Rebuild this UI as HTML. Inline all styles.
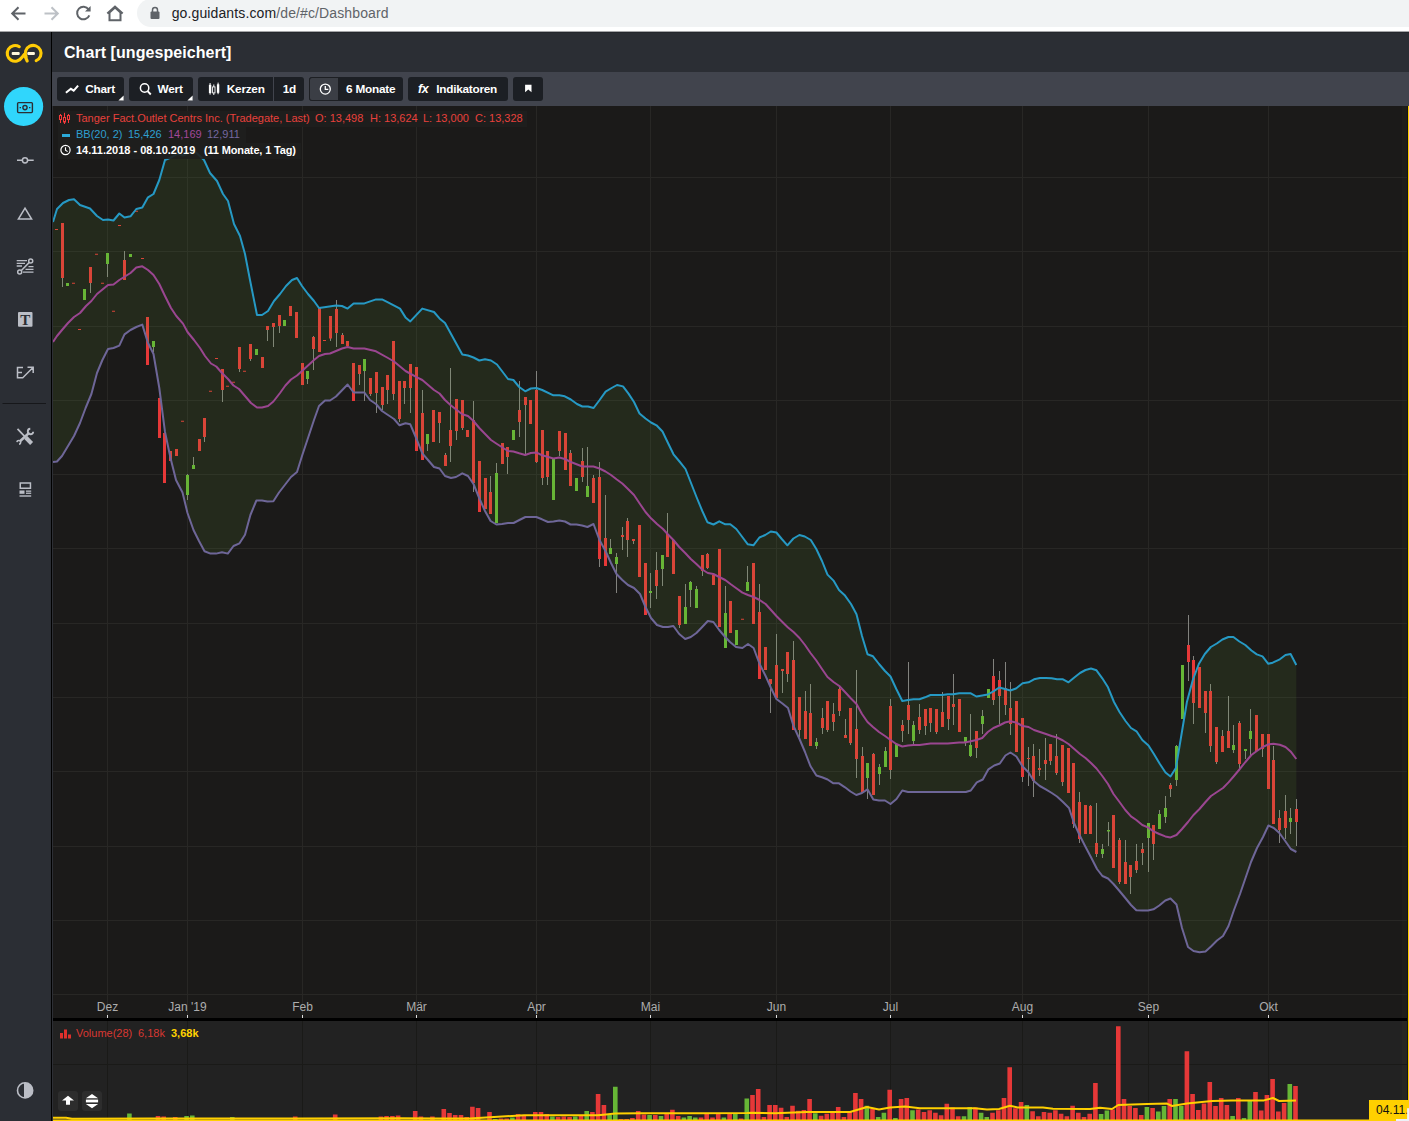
<!DOCTYPE html>
<html lang="de"><head><meta charset="utf-8"><title>Chart [ungespeichert]</title>
<style>
html,body{margin:0;padding:0;background:#1b1a19;}
body{width:1409px;height:1121px;position:relative;overflow:hidden;font-family:"Liberation Sans",sans-serif;}
svg text{font-family:"Liberation Sans",sans-serif;}
#browser{position:absolute;left:0;top:0;width:1409px;height:31px;background:#fff;}
#pill{position:absolute;left:137px;top:-1px;width:1400px;height:28px;border-radius:14px;background:#f1f3f4;}
#url{position:absolute;left:171.7px;top:4px;font-size:14px;line-height:18px;color:#5f6368;white-space:nowrap;letter-spacing:0.12px;}
#url b{font-weight:normal;color:#202124;}
#bline{position:absolute;left:0;top:31px;width:1409px;height:1px;background:#a5a6a8;}#bline2{position:absolute;left:0;top:32px;width:1409px;height:1px;background:#24272c;}
#titlebar{position:absolute;left:0;top:32px;width:1409px;height:40px;background:#2b2e34;}
#title{position:absolute;left:64px;top:43px;font-size:16px;line-height:20px;font-weight:bold;color:#fff;white-space:nowrap;letter-spacing:0.06px;}
#toolbar{position:absolute;left:52px;top:72px;width:1357px;height:34px;background:#41444d;}
#sidebar{position:absolute;left:0;top:32px;width:51px;height:1089px;background:#2b2e34;}
#sideline{position:absolute;left:51px;top:32px;width:1px;height:1089px;background:#000;}#sideline2{position:absolute;left:52px;top:106px;width:1px;height:1015px;background:#2d2f35;}
.btn{position:absolute;top:77px;height:24px;background:#1c1f24;border-radius:3px;color:#fff;font-weight:bold;font-size:11.8px;letter-spacing:-0.25px;line-height:24px;white-space:nowrap;}
.btn span{position:absolute;top:0;}
.leg{position:absolute;left:58px;height:16px;background:rgba(31,31,30,0.9);font-size:11px;line-height:16px;white-space:nowrap;}
.leg span{position:absolute;top:-1px;margin-left:-2px;}
.sbtn{position:absolute;top:1091px;width:20px;height:20px;border-radius:3px;background:#2d2d2d;}
</style></head><body>
<svg id="chart" width="1409" height="1121" viewBox="0 0 1409 1121" style="position:absolute;left:0;top:0">
<rect x="53" y="106" width="1356" height="912" fill="#1b1a19"/>
<rect x="53" y="1021" width="1356" height="100" fill="#222222"/>
<rect x="1402" y="106" width="6" height="912" fill="#1f1e19"/>
<rect x="1402" y="1021" width="6" height="79" fill="#272621"/>
<path d="M107.5 106 V1018 M187.5 106 V1018 M302.5 106 V1018 M416.5 106 V1018 M536.5 106 V1018 M650.5 106 V1018 M776.5 106 V1018 M890.5 106 V1018 M1022.5 106 V1018 M1148.5 106 V1018 M1268.5 106 V1018 M53 177.5 H1409 M53 251.5 H1409 M53 326.5 H1409 M53 400.5 H1409 M53 474.5 H1409 M53 548.5 H1409 M53 623.5 H1409 M53 697.5 H1409 M53 771.5 H1409 M53 846.5 H1409 M53 920.5 H1409 M53 994.5 H1409" stroke="#282725" stroke-width="1" fill="none" shape-rendering="crispEdges"/>
<path d="M107.5 1021 V1121 M187.5 1021 V1121 M302.5 1021 V1121 M416.5 1021 V1121 M536.5 1021 V1121 M650.5 1021 V1121 M776.5 1021 V1121 M890.5 1021 V1121 M1022.5 1021 V1121 M1148.5 1021 V1121 M1268.5 1021 V1121 M53 1064.5 H1409" stroke="#1a1a18" stroke-width="1" fill="none" shape-rendering="crispEdges"/>
<path d="M62.5 223.0 V287.0 M90.5 267.0 V293.0 M107.5 253.0 V277.0 M124.5 251.0 V280.0 M153.5 341.0 V352.0 M187.5 474.0 V500.0 M193.5 457.0 V469.0 M204.5 418.0 V442.0 M222.5 369.0 V402.0 M239.5 347.0 V372.0 M250.5 344.0 V361.0 M267.5 326.0 V341.0 M273.5 323.0 V347.0 M279.5 315.0 V333.0 M307.5 371.0 V384.0 M313.5 336.0 V370.0 M330.5 316.0 V341.0 M336.5 300.0 V347.0 M342.5 333.0 V344.0 M359.5 365.0 V385.0 M364.5 359.0 V401.0 M370.5 378.0 V396.0 M376.5 372.0 V413.0 M382.5 387.0 V410.0 M387.5 375.0 V404.0 M393.5 341.0 V400.0 M399.5 381.0 V422.0 M404.5 381.0 V404.0 M410.5 364.0 V413.0 M422.5 390.0 V460.0 M427.5 434.0 V451.0 M439.5 412.0 V443.0 M445.5 453.0 V466.0 M450.5 368.0 V462.0 M456.5 399.0 V440.0 M462.5 400.0 V430.0 M473.5 401.0 V492.0 M490.5 476.0 V514.0 M496.5 463.0 V523.0 M507.5 447.0 V474.0 M519.5 381.0 V437.0 M525.5 397.0 V454.0 M536.5 371.0 V463.0 M542.5 430.0 V485.0 M547.5 451.0 V485.0 M559.5 431.0 V456.0 M570.5 450.0 V486.0 M582.5 448.0 V482.0 M587.5 447.0 V497.0 M593.5 475.0 V503.0 M599.5 462.0 V567.0 M605.5 495.0 V566.0 M610.5 539.0 V554.0 M616.5 553.0 V593.0 M622.5 527.0 V550.0 M627.5 518.0 V557.0 M633.5 539.0 V544.0 M650.5 573.0 V608.0 M656.5 552.0 V599.0 M662.5 555.0 V586.0 M667.5 513.0 V557.0 M679.5 596.0 V628.0 M685.5 584.0 V624.0 M690.5 581.0 V607.0 M696.5 586.0 V608.0 M702.5 555.0 V576.0 M707.5 553.0 V569.0 M725.5 586.0 V648.0 M747.5 566.0 V591.0 M759.5 584.0 V679.0 M770.5 679.0 V713.0 M776.5 634.0 V698.0 M782.5 669.0 V693.0 M787.5 652.0 V682.0 M793.5 641.0 V730.0 M799.5 697.0 V737.0 M805.5 691.0 V739.0 M810.5 684.0 V746.0 M816.5 738.0 V749.0 M822.5 708.0 V734.0 M827.5 701.0 V732.0 M833.5 703.0 V731.0 M839.5 687.0 V716.0 M845.5 719.0 V738.0 M850.5 708.0 V745.0 M856.5 670.0 V778.0 M862.5 747.0 V792.0 M867.5 763.0 V799.0 M873.5 753.0 V795.0 M879.5 764.0 V785.0 M885.5 747.0 V767.0 M890.5 699.0 V779.0 M902.5 720.0 V742.0 M908.5 662.0 V734.0 M913.5 721.0 V745.0 M919.5 704.0 V734.0 M925.5 709.0 V735.0 M930.5 708.0 V732.0 M936.5 709.0 V734.0 M942.5 692.0 V727.0 M948.5 696.0 V730.0 M953.5 674.0 V725.0 M965.5 737.0 V746.0 M970.5 714.0 V757.0 M976.5 731.0 V758.0 M982.5 710.0 V734.0 M993.5 659.0 V705.0 M999.5 671.0 V724.0 M1005.5 662.0 V715.0 M1010.5 682.0 V735.0 M1022.5 718.0 V782.0 M1028.5 747.0 V786.0 M1033.5 744.0 V797.0 M1039.5 749.0 V776.0 M1045.5 738.0 V780.0 M1050.5 744.0 V765.0 M1056.5 734.0 V775.0 M1062.5 745.0 V786.0 M1073.5 763.0 V828.0 M1079.5 792.0 V843.0 M1090.5 805.0 V834.0 M1096.5 803.0 V857.0 M1102.5 844.0 V858.0 M1108.5 822.0 V846.0 M1119.5 838.0 V884.0 M1125.5 840.0 V884.0 M1130.5 865.0 V894.0 M1136.5 844.0 V873.0 M1142.5 843.0 V865.0 M1148.5 823.0 V872.0 M1153.5 825.0 V860.0 M1159.5 810.0 V829.0 M1165.5 796.0 V823.0 M1170.5 783.0 V797.0 M1176.5 745.0 V786.0 M1188.5 615.0 V681.0 M1193.5 656.0 V724.0 M1205.5 691.0 V733.0 M1210.5 684.0 V752.0 M1216.5 727.0 V764.0 M1222.5 730.0 V752.0 M1228.5 696.0 V748.0 M1233.5 725.0 V753.0 M1239.5 721.0 V768.0 M1245.5 749.0 V759.0 M1250.5 709.0 V755.0 M1262.5 734.0 V757.0 M1273.5 746.0 V824.0 M1279.5 810.0 V843.0 M1285.5 795.0 V839.0 M1290.5 808.0 V834.0 M1296.5 799.0 V846.0" stroke="#82827e" stroke-width="1" fill="none"/>
<path d="M55 229.0 h3 V230.0 h-3z M61 223.0 h3 V278.0 h-3z M72 282.8 h3 V283.8 h-3z M78 328.9 h3 V329.9 h-3z M89 267.0 h3 V283.0 h-3z M95 253.8 h3 V254.8 h-3z M101 282.8 h3 V283.8 h-3z M112 310.8 h3 V311.8 h-3z M118 225.0 h3 V226.0 h-3z M123 260.0 h3 V280.0 h-3z M135 210.8 h3 V211.8 h-3z M141 258.0 h3 V259.0 h-3z M146 317.0 h3 V365.0 h-3z M158 398.0 h3 V438.0 h-3z M163 433.0 h3 V483.0 h-3z M169 451.0 h3 V461.0 h-3z M175 449.0 h3 V456.0 h-3z M181 420.8 h3 V421.8 h-3z M198 439.0 h3 V451.0 h-3z M203 418.0 h3 V437.0 h-3z M209 390.8 h3 V391.8 h-3z M215 357.9 h3 V358.9 h-3z M221 369.0 h3 V390.0 h-3z M226 385.8 h3 V386.8 h-3z M232 381.8 h3 V382.8 h-3z M238 347.0 h3 V369.0 h-3z M243 370.8 h3 V371.8 h-3z M249 344.0 h3 V359.0 h-3z M261 357.0 h3 V368.0 h-3z M266 326.0 h3 V330.0 h-3z M272 323.0 h3 V327.0 h-3z M278 315.0 h3 V326.0 h-3z M289 306.0 h3 V316.0 h-3z M295 312.0 h3 V338.0 h-3z M301 363.0 h3 V385.0 h-3z M312 337.0 h3 V349.0 h-3z M318 308.0 h3 V352.0 h-3z M323 339.9 h3 V340.9 h-3z M329 316.0 h3 V338.6 h-3z M335 309.0 h3 V333.0 h-3z M341 335.0 h3 V344.0 h-3z M346 341.0 h3 V346.0 h-3z M352 363.0 h3 V401.0 h-3z M358 365.0 h3 V374.0 h-3z M369 378.0 h3 V394.0 h-3z M375 372.0 h3 V393.0 h-3z M381 387.0 h3 V405.0 h-3z M386 375.0 h3 V390.0 h-3z M392 341.0 h3 V394.0 h-3z M398 381.0 h3 V419.0 h-3z M403 381.0 h3 V388.0 h-3z M409 364.0 h3 V388.0 h-3z M415 367.0 h3 V451.0 h-3z M421 413.0 h3 V460.0 h-3z M432 410.0 h3 V442.0 h-3z M438 412.0 h3 V423.0 h-3z M444 455.0 h3 V466.0 h-3z M449 430.0 h3 V446.0 h-3z M455 399.0 h3 V431.0 h-3z M461 400.0 h3 V428.0 h-3z M466 430.0 h3 V437.0 h-3z M472 420.0 h3 V483.0 h-3z M478 461.0 h3 V512.0 h-3z M484 478.0 h3 V509.0 h-3z M489 492.0 h3 V514.0 h-3z M501 443.0 h3 V464.0 h-3z M506 447.0 h3 V457.0 h-3z M518 410.0 h3 V422.0 h-3z M524 397.0 h3 V405.0 h-3z M529 400.0 h3 V424.0 h-3z M535 390.0 h3 V462.0 h-3z M541 430.0 h3 V478.0 h-3z M546 451.0 h3 V477.0 h-3z M558 431.0 h3 V451.0 h-3z M564 433.0 h3 V470.0 h-3z M569 453.0 h3 V486.0 h-3z M581 461.0 h3 V477.0 h-3z M592 478.0 h3 V503.0 h-3z M598 477.0 h3 V559.0 h-3z M604 538.0 h3 V566.0 h-3z M621 535.0 h3 V537.0 h-3z M626 521.0 h3 V540.0 h-3z M632 539.0 h3 V541.0 h-3z M638 525.0 h3 V577.0 h-3z M644 563.0 h3 V615.0 h-3z M655 570.0 h3 V586.0 h-3z M666 534.0 h3 V557.0 h-3z M672 540.0 h3 V574.0 h-3z M678 596.0 h3 V625.0 h-3z M701 555.0 h3 V571.0 h-3z M706 554.0 h3 V568.0 h-3z M712 575.0 h3 V585.0 h-3z M718 549.0 h3 V627.0 h-3z M729 601.0 h3 V633.0 h-3z M741 618.8 h3 V619.8 h-3z M752 563.0 h3 V624.0 h-3z M758 612.0 h3 V679.0 h-3z M764 647.0 h3 V670.0 h-3z M769 679.0 h3 V684.0 h-3z M775 665.0 h3 V698.0 h-3z M781 669.0 h3 V671.0 h-3z M786 652.0 h3 V674.0 h-3z M792 660.0 h3 V730.0 h-3z M798 697.0 h3 V730.0 h-3z M804 711.0 h3 V739.0 h-3z M809 713.0 h3 V746.0 h-3z M821 718.0 h3 V728.0 h-3z M826 701.0 h3 V730.0 h-3z M832 714.0 h3 V722.0 h-3z M838 689.0 h3 V711.0 h-3z M844 735.0 h3 V738.0 h-3z M849 708.0 h3 V743.0 h-3z M855 729.0 h3 V759.0 h-3z M861 756.0 h3 V792.0 h-3z M872 754.0 h3 V795.0 h-3z M889 706.0 h3 V770.0 h-3z M901 725.0 h3 V731.0 h-3z M907 705.0 h3 V720.0 h-3z M918 717.0 h3 V730.0 h-3z M924 709.0 h3 V726.0 h-3z M929 708.0 h3 V723.0 h-3z M935 709.0 h3 V732.0 h-3z M941 712.0 h3 V727.0 h-3z M947 696.0 h3 V719.0 h-3z M952 704.0 h3 V707.0 h-3z M958 699.0 h3 V732.0 h-3z M975 731.0 h3 V748.0 h-3z M992 676.0 h3 V700.0 h-3z M998 680.0 h3 V696.0 h-3z M1004 688.0 h3 V705.0 h-3z M1009 708.0 h3 V724.0 h-3z M1015 701.0 h3 V752.0 h-3z M1021 718.0 h3 V777.0 h-3z M1027 758.0 h3 V759.0 h-3z M1032 756.0 h3 V781.0 h-3z M1038 768.0 h3 V770.0 h-3z M1044 760.0 h3 V764.0 h-3z M1049 744.0 h3 V761.0 h-3z M1055 756.0 h3 V773.0 h-3z M1061 745.0 h3 V782.0 h-3z M1067 748.0 h3 V793.0 h-3z M1072 763.0 h3 V824.0 h-3z M1078 802.0 h3 V839.0 h-3z M1084 805.0 h3 V834.0 h-3z M1089 806.0 h3 V834.0 h-3z M1095 843.0 h3 V854.0 h-3z M1112 815.0 h3 V868.0 h-3z M1118 840.0 h3 V882.0 h-3z M1124 862.0 h3 V884.0 h-3z M1129 865.0 h3 V877.0 h-3z M1135 861.0 h3 V870.0 h-3z M1141 849.0 h3 V853.0 h-3z M1152 825.0 h3 V844.0 h-3z M1169 785.0 h3 V789.0 h-3z M1187 645.0 h3 V662.0 h-3z M1192 660.0 h3 V703.0 h-3z M1198 667.0 h3 V708.0 h-3z M1204 691.0 h3 V713.0 h-3z M1209 691.0 h3 V746.0 h-3z M1215 727.0 h3 V762.0 h-3z M1221 736.0 h3 V752.0 h-3z M1227 731.0 h3 V748.0 h-3z M1238 723.0 h3 V764.0 h-3z M1255 715.0 h3 V751.0 h-3z M1261 734.0 h3 V749.0 h-3z M1267 734.0 h3 V789.0 h-3z M1272 760.0 h3 V824.0 h-3z M1278 818.0 h3 V830.0 h-3z M1284 811.0 h3 V828.0 h-3z M1295 809.0 h3 V822.0 h-3z" fill="#e63838"/>
<path d="M66 283.0 h3 V286.0 h-3z M83 289.0 h3 V300.0 h-3z M106 253.0 h3 V264.0 h-3z M129 254.0 h3 V257.0 h-3z M152 341.0 h3 V347.0 h-3z M186 475.0 h3 V495.0 h-3z M192 465.0 h3 V469.0 h-3z M255 349.0 h3 V355.0 h-3z M283 320.0 h3 V326.0 h-3z M306 371.0 h3 V379.0 h-3z M363 359.0 h3 V371.0 h-3z M426 434.0 h3 V444.0 h-3z M495 473.0 h3 V523.0 h-3z M512 430.0 h3 V440.0 h-3z M552 459.0 h3 V500.0 h-3z M575 478.0 h3 V491.0 h-3z M586 486.0 h3 V497.0 h-3z M609 548.0 h3 V554.0 h-3z M615 557.0 h3 V564.0 h-3z M649 591.0 h3 V593.0 h-3z M661 555.0 h3 V569.0 h-3z M684 607.0 h3 V624.0 h-3z M689 582.0 h3 V590.0 h-3z M695 589.0 h3 V608.0 h-3z M724 613.0 h3 V648.0 h-3z M735 630.0 h3 V645.0 h-3z M746 582.0 h3 V591.0 h-3z M815 742.0 h3 V746.0 h-3z M866 763.0 h3 V778.0 h-3z M878 767.0 h3 V774.0 h-3z M884 751.0 h3 V767.0 h-3z M895 744.0 h3 V757.0 h-3z M912 725.0 h3 V741.0 h-3z M964 737.0 h3 V742.0 h-3z M969 745.0 h3 V756.0 h-3z M981 716.0 h3 V724.0 h-3z M987 689.0 h3 V698.0 h-3z M1101 849.0 h3 V854.0 h-3z M1107 830.0 h3 V831.5 h-3z M1147 823.0 h3 V838.0 h-3z M1158 814.0 h3 V829.0 h-3z M1164 808.0 h3 V817.0 h-3z M1175 746.0 h3 V780.0 h-3z M1181 665.0 h3 V719.0 h-3z M1232 745.0 h3 V750.0 h-3z M1244 749.0 h3 V751.0 h-3z M1249 731.0 h3 V739.0 h-3z M1289 818.0 h3 V822.0 h-3z" fill="#66b636"/>
<path d="M53.0 222.0 L57.0 209.0 L63.0 203.0 L69.0 200.0 L74.0 199.3 L80.0 205.0 L90.0 208.5 L97.0 216.0 L103.0 220.0 L108.0 219.5 L113.5 220.5 L119.3 213.5 L124.5 217.5 L130.5 216.3 L136.3 209.0 L142.3 207.5 L148.0 197.3 L153.5 194.0 L159.3 180.0 L165.0 160.0 L172.0 157.0 L178.0 153.5 L183.0 155.5 L190.0 152.4 L196.0 152.4 L204.0 160.0 L210.0 173.0 L217.0 181.0 L223.0 194.0 L228.0 201.0 L234.0 224.0 L240.0 236.0 L245.0 254.0 L250.0 280.0 L257.0 315.0 L262.0 315.0 L268.0 311.0 L274.0 301.0 L280.0 294.0 L286.0 286.0 L292.0 280.0 L297.0 278.0 L302.0 286.0 L308.0 294.0 L314.0 301.0 L319.0 308.0 L326.0 307.0 L336.0 305.4 L342.0 306.0 L347.6 308.6 L353.6 303.4 L364.4 303.4 L376.0 299.4 L382.0 299.4 L388.0 302.4 L400.0 308.6 L405.5 317.4 L410.3 321.4 L422.3 308.6 L434.0 312.0 L439.5 318.4 L445.0 323.0 L462.3 354.5 L468.0 355.5 L473.5 357.5 L479.3 360.5 L485.0 359.3 L491.0 360.5 L497.0 364.5 L508.0 379.0 L513.4 380.0 L519.2 387.0 L525.2 391.3 L530.8 388.5 L536.4 388.0 L542.2 390.0 L553.4 395.3 L559.4 395.3 L564.8 396.3 L570.8 399.5 L577.0 404.0 L582.4 406.5 L588.0 406.5 L593.6 408.0 L599.6 400.0 L605.6 391.6 L611.6 388.0 L617.0 385.0 L623.0 386.4 L628.5 393.6 L634.0 402.0 L639.5 413.5 L645.5 418.5 L651.0 422.5 L656.5 425.3 L662.5 431.5 L668.0 443.0 L673.5 454.3 L679.5 461.5 L685.5 469.0 L691.0 483.0 L696.5 497.0 L702.3 511.0 L707.5 522.3 L713.5 524.5 L719.3 521.3 L725.3 524.3 L730.3 524.3 L736.3 529.0 L742.3 537.0 L747.8 544.3 L753.4 545.3 L759.4 537.5 L765.2 535.0 L770.8 531.5 L776.4 532.5 L781.8 539.0 L787.4 545.3 L793.4 538.5 L799.4 535.0 L804.8 536.5 L810.8 540.0 L816.3 549.0 L822.0 561.0 L827.5 574.6 L833.5 580.6 L839.0 590.0 L845.0 595.6 L851.0 604.0 L856.5 614.3 L862.0 636.0 L867.5 654.3 L873.0 656.3 L879.0 664.0 L885.0 671.0 L890.5 676.5 L896.3 689.0 L902.3 701.0 L908.0 700.0 L913.5 699.3 L919.5 699.3 L925.0 697.3 L930.5 695.0 L936.5 695.0 L942.2 695.0 L947.8 694.3 L953.4 694.3 L959.2 693.3 L964.8 693.3 L970.8 693.3 L976.4 696.5 L982.2 695.5 L987.8 694.5 L993.4 691.3 L999.2 687.5 L1005.0 689.0 L1010.4 690.5 L1016.0 688.5 L1022.6 683.3 L1028.6 682.3 L1034.0 679.3 L1040.0 678.0 L1046.0 678.0 L1051.6 678.3 L1057.0 679.3 L1063.0 679.3 L1068.5 682.3 L1074.3 677.5 L1080.0 673.0 L1085.5 670.0 L1091.0 668.5 L1096.5 670.3 L1102.3 678.3 L1108.0 687.3 L1114.0 702.0 L1119.5 712.0 L1125.5 721.0 L1131.0 728.0 L1136.5 731.3 L1142.3 740.0 L1148.5 745.5 L1153.9 754.0 L1159.9 764.0 L1165.5 772.5 L1170.5 776.5 L1175.9 768.0 L1180.9 738.0 L1186.9 702.0 L1192.8 680.0 L1198.8 664.0 L1204.8 654.0 L1210.8 647.0 L1216.8 643.5 L1222.4 639.5 L1228.4 637.0 L1233.4 637.0 L1239.4 641.5 L1245.3 645.0 L1251.4 650.5 L1256.8 654.4 L1262.5 656.4 L1268.3 663.8 L1272.7 662.7 L1279.8 659.3 L1285.5 655.0 L1290.6 654.0 L1296.3 665.0 L1296.4 852.0 L1290.8 849.0 L1285.2 841.0 L1279.4 833.0 L1273.8 828.0 L1268.4 825.5 L1263.0 837.0 L1257.0 848.0 L1251.0 862.0 L1245.5 878.0 L1240.0 894.0 L1234.0 910.0 L1228.5 926.0 L1223.0 936.0 L1217.0 940.5 L1211.0 946.5 L1205.5 951.5 L1199.5 952.3 L1193.5 951.0 L1188.0 947.0 L1182.0 928.0 L1176.5 904.5 L1170.5 898.5 L1165.3 900.5 L1159.3 905.5 L1153.5 909.3 L1148.0 910.5 L1142.3 910.5 L1136.3 910.3 L1131.0 905.0 L1125.3 898.0 L1119.5 891.0 L1113.5 884.0 L1108.0 878.5 L1102.4 876.0 L1097.0 869.0 L1091.4 858.0 L1085.6 847.0 L1080.0 836.0 L1074.0 823.0 L1069.0 808.0 L1063.0 802.0 L1057.0 796.5 L1051.8 793.0 L1045.8 789.3 L1039.8 786.0 L1033.8 781.0 L1028.4 772.3 L1022.4 766.3 L1016.4 756.5 L1010.4 752.5 L1005.4 755.5 L999.8 763.5 L994.2 765.5 L988.4 769.3 L982.8 779.5 L976.8 782.3 L970.8 790.5 L965.8 792.0 L908.0 792.0 L902.3 790.5 L896.5 799.0 L890.5 804.0 L885.0 800.5 L879.0 800.5 L873.3 799.5 L867.5 789.3 L862.0 793.0 L856.3 795.0 L850.5 791.5 L845.0 787.3 L839.0 783.3 L833.4 783.3 L827.6 779.5 L822.0 777.3 L816.4 775.5 L810.4 766.0 L805.0 752.0 L799.5 739.0 L793.5 726.0 L788.0 708.0 L782.4 703.5 L776.4 699.0 L771.0 688.0 L765.6 676.0 L759.6 664.0 L753.6 648.0 L748.0 644.0 L742.4 648.0 L736.0 647.0 L730.0 642.0 L725.2 637.0 L719.2 630.0 L713.4 622.0 L707.8 621.0 L702.2 627.0 L696.4 633.0 L690.8 637.0 L685.2 639.0 L679.2 634.0 L673.4 626.0 L668.0 627.0 L663.0 627.0 L657.0 625.0 L651.0 618.0 L645.5 607.0 L640.0 594.0 L634.0 588.0 L628.0 585.0 L622.3 580.0 L616.5 574.0 L611.0 563.0 L605.5 551.0 L599.5 540.0 L593.5 524.0 L587.5 527.0 L582.0 525.5 L576.5 524.5 L570.5 524.5 L565.0 521.5 L559.3 520.5 L553.5 521.5 L548.0 522.0 L542.0 519.3 L536.3 517.0 L525.4 517.0 L519.4 520.0 L513.6 523.0 L508.0 523.0 L502.0 524.0 L496.4 524.5 L490.6 521.0 L485.0 511.0 L479.6 499.0 L473.5 484.0 L468.0 476.0 L462.3 473.3 L456.0 477.0 L451.0 478.0 L445.0 476.0 L439.5 468.5 L434.0 467.0 L428.0 460.0 L422.3 453.3 L417.0 440.0 L410.3 424.3 L405.5 423.3 L399.5 425.3 L394.0 419.0 L388.0 415.0 L382.0 411.0 L376.0 404.0 L370.0 400.0 L364.4 392.5 L353.6 392.5 L347.6 384.5 L336.0 396.5 L330.0 400.5 L325.0 400.5 L319.0 406.0 L314.0 420.0 L308.0 438.0 L302.0 456.0 L297.0 472.0 L291.0 477.0 L279.0 492.5 L273.4 501.3 L267.4 501.5 L262.0 500.5 L256.4 500.5 L250.4 515.0 L245.0 534.8 L239.5 543.3 L233.5 546.0 L227.8 553.6 L222.0 552.2 L216.0 553.6 L210.5 553.6 L204.5 551.2 L199.0 541.0 L193.5 530.0 L187.5 513.0 L182.5 492.5 L176.0 480.0 L170.5 458.0 L165.0 432.0 L159.3 388.0 L153.5 354.0 L148.0 343.0 L142.3 324.6 L136.3 327.0 L130.5 330.0 L124.5 334.4 L119.3 345.6 L113.5 348.0 L108.0 349.0 L102.4 360.0 L97.0 373.0 L91.4 394.0 L85.6 408.0 L80.0 423.0 L74.0 436.0 L68.0 446.0 L62.0 456.0 L57.0 461.5 L53.0 462.0Z" fill="rgba(110,175,60,0.105)"/>
<path d="M53.0 462.0 L57.0 461.5 L62.0 456.0 L68.0 446.0 L74.0 436.0 L80.0 423.0 L85.6 408.0 L91.4 394.0 L97.0 373.0 L102.4 360.0 L108.0 349.0 L113.5 348.0 L119.3 345.6 L124.5 334.4 L130.5 330.0 L136.3 327.0 L142.3 324.6 L148.0 343.0 L153.5 354.0 L159.3 388.0 L165.0 432.0 L170.5 458.0 L176.0 480.0 L182.5 492.5 L187.5 513.0 L193.5 530.0 L199.0 541.0 L204.5 551.2 L210.5 553.6 L216.0 553.6 L222.0 552.2 L227.8 553.6 L233.5 546.0 L239.5 543.3 L245.0 534.8 L250.4 515.0 L256.4 500.5 L262.0 500.5 L267.4 501.5 L273.4 501.3 L279.0 492.5 L291.0 477.0 L297.0 472.0 L302.0 456.0 L308.0 438.0 L314.0 420.0 L319.0 406.0 L325.0 400.5 L330.0 400.5 L336.0 396.5 L347.6 384.5 L353.6 392.5 L364.4 392.5 L370.0 400.0 L376.0 404.0 L382.0 411.0 L388.0 415.0 L394.0 419.0 L399.5 425.3 L405.5 423.3 L410.3 424.3 L417.0 440.0 L422.3 453.3 L428.0 460.0 L434.0 467.0 L439.5 468.5 L445.0 476.0 L451.0 478.0 L456.0 477.0 L462.3 473.3 L468.0 476.0 L473.5 484.0 L479.6 499.0 L485.0 511.0 L490.6 521.0 L496.4 524.5 L502.0 524.0 L508.0 523.0 L513.6 523.0 L519.4 520.0 L525.4 517.0 L536.3 517.0 L542.0 519.3 L548.0 522.0 L553.5 521.5 L559.3 520.5 L565.0 521.5 L570.5 524.5 L576.5 524.5 L582.0 525.5 L587.5 527.0 L593.5 524.0 L599.5 540.0 L605.5 551.0 L611.0 563.0 L616.5 574.0 L622.3 580.0 L628.0 585.0 L634.0 588.0 L640.0 594.0 L645.5 607.0 L651.0 618.0 L657.0 625.0 L663.0 627.0 L668.0 627.0 L673.4 626.0 L679.2 634.0 L685.2 639.0 L690.8 637.0 L696.4 633.0 L702.2 627.0 L707.8 621.0 L713.4 622.0 L719.2 630.0 L725.2 637.0 L730.0 642.0 L736.0 647.0 L742.4 648.0 L748.0 644.0 L753.6 648.0 L759.6 664.0 L765.6 676.0 L771.0 688.0 L776.4 699.0 L782.4 703.5 L788.0 708.0 L793.5 726.0 L799.5 739.0 L805.0 752.0 L810.4 766.0 L816.4 775.5 L822.0 777.3 L827.6 779.5 L833.4 783.3 L839.0 783.3 L845.0 787.3 L850.5 791.5 L856.3 795.0 L862.0 793.0 L867.5 789.3 L873.3 799.5 L879.0 800.5 L885.0 800.5 L890.5 804.0 L896.5 799.0 L902.3 790.5 L908.0 792.0 L965.8 792.0 L970.8 790.5 L976.8 782.3 L982.8 779.5 L988.4 769.3 L994.2 765.5 L999.8 763.5 L1005.4 755.5 L1010.4 752.5 L1016.4 756.5 L1022.4 766.3 L1028.4 772.3 L1033.8 781.0 L1039.8 786.0 L1045.8 789.3 L1051.8 793.0 L1057.0 796.5 L1063.0 802.0 L1069.0 808.0 L1074.0 823.0 L1080.0 836.0 L1085.6 847.0 L1091.4 858.0 L1097.0 869.0 L1102.4 876.0 L1108.0 878.5 L1113.5 884.0 L1119.5 891.0 L1125.3 898.0 L1131.0 905.0 L1136.3 910.3 L1142.3 910.5 L1148.0 910.5 L1153.5 909.3 L1159.3 905.5 L1165.3 900.5 L1170.5 898.5 L1176.5 904.5 L1182.0 928.0 L1188.0 947.0 L1193.5 951.0 L1199.5 952.3 L1205.5 951.5 L1211.0 946.5 L1217.0 940.5 L1223.0 936.0 L1228.5 926.0 L1234.0 910.0 L1240.0 894.0 L1245.5 878.0 L1251.0 862.0 L1257.0 848.0 L1263.0 837.0 L1268.4 825.5 L1273.8 828.0 L1279.4 833.0 L1285.2 841.0 L1290.8 849.0 L1296.4 852.0" stroke="#6e6698" stroke-width="2" fill="none" stroke-linejoin="round" stroke-linecap="butt"/>
<path d="M53.0 342.0 L57.0 336.0 L62.0 330.0 L68.0 323.0 L74.0 317.0 L80.0 313.0 L86.0 306.0 L91.4 301.0 L97.0 294.0 L108.0 285.0 L113.5 284.5 L119.3 280.0 L130.5 273.0 L136.3 267.5 L142.3 266.3 L148.0 270.0 L153.5 275.0 L159.3 284.0 L165.0 296.0 L171.0 308.0 L176.3 316.0 L183.0 323.6 L187.5 332.0 L194.0 340.0 L200.0 348.0 L205.0 356.0 L211.0 363.5 L216.3 366.5 L222.0 373.0 L228.0 379.0 L233.5 385.5 L239.0 389.0 L245.0 396.0 L251.0 403.0 L257.0 407.5 L262.0 407.5 L268.0 406.0 L273.4 401.5 L280.0 393.0 L285.4 385.5 L291.0 379.5 L297.0 375.5 L302.0 371.0 L308.0 365.5 L314.0 360.0 L319.0 356.0 L325.0 354.0 L330.0 353.5 L336.0 351.0 L342.0 348.5 L347.6 347.0 L353.6 348.5 L364.4 348.5 L376.0 351.3 L388.0 358.0 L394.0 361.5 L405.5 371.0 L417.0 377.3 L422.3 380.0 L434.0 390.0 L439.5 393.5 L445.0 400.0 L451.0 405.5 L462.3 414.3 L468.0 416.0 L473.5 421.0 L479.3 428.0 L491.0 440.0 L497.0 444.0 L508.0 451.0 L513.4 451.5 L519.2 453.3 L525.2 455.0 L530.8 453.0 L536.4 452.5 L542.2 455.3 L553.4 458.5 L559.4 457.5 L564.8 459.0 L570.8 462.0 L582.4 466.5 L593.4 466.5 L599.5 468.5 L605.5 471.5 L611.0 475.0 L616.5 479.3 L622.3 483.5 L628.0 489.0 L634.0 495.0 L640.0 504.0 L645.5 512.0 L651.0 518.3 L657.0 524.0 L663.0 529.0 L668.0 534.5 L673.4 540.0 L679.2 547.0 L685.2 553.0 L690.8 559.0 L696.4 564.0 L702.2 569.5 L707.8 573.0 L713.4 574.0 L719.2 577.0 L725.2 580.0 L730.8 584.3 L736.0 588.0 L742.4 592.6 L748.0 595.0 L753.6 597.0 L759.6 600.0 L765.6 604.0 L771.0 610.0 L776.4 616.0 L782.4 622.0 L788.0 627.5 L793.5 632.0 L799.5 638.0 L805.0 645.0 L810.5 653.0 L816.3 660.5 L822.0 669.0 L827.5 677.0 L833.5 682.0 L839.3 686.0 L845.0 692.0 L851.0 698.5 L856.5 704.0 L862.0 714.0 L867.5 722.0 L873.0 727.0 L879.0 732.0 L885.0 736.0 L890.5 740.0 L896.3 744.0 L902.3 746.5 L908.0 745.5 L913.5 745.0 L919.5 745.0 L925.0 744.3 L930.5 743.5 L942.2 743.5 L947.8 743.5 L953.4 743.0 L959.2 742.5 L964.8 742.5 L970.8 741.3 L976.4 740.0 L982.2 738.0 L987.8 732.0 L993.4 728.0 L999.2 725.5 L1005.0 722.5 L1010.4 721.3 L1016.0 722.5 L1022.6 726.0 L1028.6 727.0 L1034.0 730.0 L1040.0 732.0 L1046.0 734.0 L1051.6 736.0 L1057.0 737.5 L1063.0 740.5 L1068.5 744.0 L1074.3 749.0 L1080.0 754.0 L1085.5 758.0 L1091.0 763.0 L1096.5 768.5 L1102.3 776.0 L1108.0 784.0 L1113.5 794.0 L1119.5 802.0 L1125.3 810.0 L1131.0 816.4 L1136.3 820.0 L1142.3 825.0 L1148.0 827.4 L1153.5 831.4 L1159.3 834.0 L1165.3 836.4 L1170.5 837.4 L1176.5 835.0 L1182.0 829.0 L1188.0 822.0 L1193.5 815.0 L1199.5 809.0 L1205.5 802.0 L1211.0 796.0 L1217.0 792.0 L1223.0 788.0 L1228.5 782.4 L1234.0 776.0 L1239.4 769.5 L1245.4 762.0 L1251.4 755.0 L1256.8 751.0 L1262.8 747.0 L1268.4 744.3 L1273.4 743.8 L1279.8 744.8 L1285.5 747.0 L1290.6 751.4 L1296.3 759.0" stroke="#9a4690" stroke-width="2" fill="none" stroke-linejoin="round" stroke-linecap="butt"/>
<path d="M53.0 222.0 L57.0 209.0 L63.0 203.0 L69.0 200.0 L74.0 199.3 L80.0 205.0 L90.0 208.5 L97.0 216.0 L103.0 220.0 L108.0 219.5 L113.5 220.5 L119.3 213.5 L124.5 217.5 L130.5 216.3 L136.3 209.0 L142.3 207.5 L148.0 197.3 L153.5 194.0 L159.3 180.0 L165.0 160.0 L172.0 157.0 L178.0 153.5 L183.0 155.5 L190.0 152.4 L196.0 152.4 L204.0 160.0 L210.0 173.0 L217.0 181.0 L223.0 194.0 L228.0 201.0 L234.0 224.0 L240.0 236.0 L245.0 254.0 L250.0 280.0 L257.0 315.0 L262.0 315.0 L268.0 311.0 L274.0 301.0 L280.0 294.0 L286.0 286.0 L292.0 280.0 L297.0 278.0 L302.0 286.0 L308.0 294.0 L314.0 301.0 L319.0 308.0 L326.0 307.0 L336.0 305.4 L342.0 306.0 L347.6 308.6 L353.6 303.4 L364.4 303.4 L376.0 299.4 L382.0 299.4 L388.0 302.4 L400.0 308.6 L405.5 317.4 L410.3 321.4 L422.3 308.6 L434.0 312.0 L439.5 318.4 L445.0 323.0 L462.3 354.5 L468.0 355.5 L473.5 357.5 L479.3 360.5 L485.0 359.3 L491.0 360.5 L497.0 364.5 L508.0 379.0 L513.4 380.0 L519.2 387.0 L525.2 391.3 L530.8 388.5 L536.4 388.0 L542.2 390.0 L553.4 395.3 L559.4 395.3 L564.8 396.3 L570.8 399.5 L577.0 404.0 L582.4 406.5 L588.0 406.5 L593.6 408.0 L599.6 400.0 L605.6 391.6 L611.6 388.0 L617.0 385.0 L623.0 386.4 L628.5 393.6 L634.0 402.0 L639.5 413.5 L645.5 418.5 L651.0 422.5 L656.5 425.3 L662.5 431.5 L668.0 443.0 L673.5 454.3 L679.5 461.5 L685.5 469.0 L691.0 483.0 L696.5 497.0 L702.3 511.0 L707.5 522.3 L713.5 524.5 L719.3 521.3 L725.3 524.3 L730.3 524.3 L736.3 529.0 L742.3 537.0 L747.8 544.3 L753.4 545.3 L759.4 537.5 L765.2 535.0 L770.8 531.5 L776.4 532.5 L781.8 539.0 L787.4 545.3 L793.4 538.5 L799.4 535.0 L804.8 536.5 L810.8 540.0 L816.3 549.0 L822.0 561.0 L827.5 574.6 L833.5 580.6 L839.0 590.0 L845.0 595.6 L851.0 604.0 L856.5 614.3 L862.0 636.0 L867.5 654.3 L873.0 656.3 L879.0 664.0 L885.0 671.0 L890.5 676.5 L896.3 689.0 L902.3 701.0 L908.0 700.0 L913.5 699.3 L919.5 699.3 L925.0 697.3 L930.5 695.0 L936.5 695.0 L942.2 695.0 L947.8 694.3 L953.4 694.3 L959.2 693.3 L964.8 693.3 L970.8 693.3 L976.4 696.5 L982.2 695.5 L987.8 694.5 L993.4 691.3 L999.2 687.5 L1005.0 689.0 L1010.4 690.5 L1016.0 688.5 L1022.6 683.3 L1028.6 682.3 L1034.0 679.3 L1040.0 678.0 L1046.0 678.0 L1051.6 678.3 L1057.0 679.3 L1063.0 679.3 L1068.5 682.3 L1074.3 677.5 L1080.0 673.0 L1085.5 670.0 L1091.0 668.5 L1096.5 670.3 L1102.3 678.3 L1108.0 687.3 L1114.0 702.0 L1119.5 712.0 L1125.5 721.0 L1131.0 728.0 L1136.5 731.3 L1142.3 740.0 L1148.5 745.5 L1153.9 754.0 L1159.9 764.0 L1165.5 772.5 L1170.5 776.5 L1175.9 768.0 L1180.9 738.0 L1186.9 702.0 L1192.8 680.0 L1198.8 664.0 L1204.8 654.0 L1210.8 647.0 L1216.8 643.5 L1222.4 639.5 L1228.4 637.0 L1233.4 637.0 L1239.4 641.5 L1245.3 645.0 L1251.4 650.5 L1256.8 654.4 L1262.5 656.4 L1268.3 663.8 L1272.7 662.7 L1279.8 659.3 L1285.5 655.0 L1290.6 654.0 L1296.3 665.0" stroke="#2699c4" stroke-width="2" fill="none" stroke-linejoin="round" stroke-linecap="butt"/>
<rect x="53" y="1018" width="1356" height="3" fill="#000"/>
<rect x="107" y="1015" width="1" height="3" fill="#ddd"/>
<text x="107.5" y="1011" text-anchor="middle" font-size="12" fill="#adadad">Dez</text>
<rect x="187" y="1015" width="1" height="3" fill="#ddd"/>
<text x="187.5" y="1011" text-anchor="middle" font-size="12" fill="#adadad">Jan '19</text>
<rect x="302" y="1015" width="1" height="3" fill="#ddd"/>
<text x="302.5" y="1011" text-anchor="middle" font-size="12" fill="#adadad">Feb</text>
<rect x="416" y="1015" width="1" height="3" fill="#ddd"/>
<text x="416.5" y="1011" text-anchor="middle" font-size="12" fill="#adadad">Mär</text>
<rect x="536" y="1015" width="1" height="3" fill="#ddd"/>
<text x="536.5" y="1011" text-anchor="middle" font-size="12" fill="#adadad">Apr</text>
<rect x="650" y="1015" width="1" height="3" fill="#ddd"/>
<text x="650.5" y="1011" text-anchor="middle" font-size="12" fill="#adadad">Mai</text>
<rect x="776" y="1015" width="1" height="3" fill="#ddd"/>
<text x="776.5" y="1011" text-anchor="middle" font-size="12" fill="#adadad">Jun</text>
<rect x="890" y="1015" width="1" height="3" fill="#ddd"/>
<text x="890.5" y="1011" text-anchor="middle" font-size="12" fill="#adadad">Jul</text>
<rect x="1022" y="1015" width="1" height="3" fill="#ddd"/>
<text x="1022.5" y="1011" text-anchor="middle" font-size="12" fill="#adadad">Aug</text>
<rect x="1148" y="1015" width="1" height="3" fill="#ddd"/>
<text x="1148.5" y="1011" text-anchor="middle" font-size="12" fill="#adadad">Sep</text>
<rect x="1268" y="1015" width="1" height="3" fill="#ddd"/>
<text x="1268.5" y="1011" text-anchor="middle" font-size="12" fill="#adadad">Okt</text>
<path d="M155.7 1116.0 h4.6 V1121 h-4.6z M161.4 1116.5 h4.6 V1121 h-4.6z M172.9 1117.0 h4.6 V1121 h-4.6z M292.9 1116.5 h4.6 V1121 h-4.6z M332.9 1114.6 h4.6 V1121 h-4.6z M378.6 1116.5 h4.6 V1121 h-4.6z M384.3 1116.0 h4.6 V1121 h-4.6z M390.1 1116.0 h4.6 V1121 h-4.6z M395.8 1115.5 h4.6 V1121 h-4.6z M412.9 1111.0 h4.6 V1121 h-4.6z M418.6 1116.4 h4.6 V1121 h-4.6z M430.1 1116.4 h4.6 V1121 h-4.6z M441.5 1109.0 h4.6 V1121 h-4.6z M447.2 1113.0 h4.6 V1121 h-4.6z M452.9 1115.0 h4.6 V1121 h-4.6z M458.7 1115.0 h4.6 V1121 h-4.6z M464.4 1117.0 h4.6 V1121 h-4.6z M470.1 1106.7 h4.6 V1121 h-4.6z M475.8 1108.0 h4.6 V1121 h-4.6z M487.2 1112.0 h4.6 V1121 h-4.6z M498.7 1118.5 h4.6 V1121 h-4.6z M504.4 1118.5 h4.6 V1121 h-4.6z M515.8 1114.0 h4.6 V1121 h-4.6z M521.5 1115.0 h4.6 V1121 h-4.6z M533.0 1112.0 h4.6 V1121 h-4.6z M538.7 1112.0 h4.6 V1121 h-4.6z M544.4 1114.0 h4.6 V1121 h-4.6z M555.8 1117.0 h4.6 V1121 h-4.6z M561.5 1116.6 h4.6 V1121 h-4.6z M567.3 1117.0 h4.6 V1121 h-4.6z M578.7 1116.0 h4.6 V1121 h-4.6z M590.1 1112.0 h4.6 V1121 h-4.6z M595.8 1094.0 h4.6 V1121 h-4.6z M601.6 1105.0 h4.6 V1121 h-4.6z M618.7 1119.0 h4.6 V1121 h-4.6z M624.4 1119.0 h4.6 V1121 h-4.6z M630.1 1118.0 h4.6 V1121 h-4.6z M635.9 1111.0 h4.6 V1121 h-4.6z M641.6 1114.6 h4.6 V1121 h-4.6z M653.0 1115.0 h4.6 V1121 h-4.6z M664.4 1113.4 h4.6 V1121 h-4.6z M670.1 1109.7 h4.6 V1121 h-4.6z M675.9 1116.0 h4.6 V1121 h-4.6z M698.7 1117.6 h4.6 V1121 h-4.6z M704.4 1113.4 h4.6 V1121 h-4.6z M710.2 1117.6 h4.6 V1121 h-4.6z M715.9 1113.4 h4.6 V1121 h-4.6z M727.3 1113.4 h4.6 V1121 h-4.6z M738.7 1118.5 h4.6 V1121 h-4.6z M750.2 1095.0 h4.6 V1121 h-4.6z M755.9 1089.0 h4.6 V1121 h-4.6z M761.6 1117.0 h4.6 V1121 h-4.6z M767.3 1105.0 h4.6 V1121 h-4.6z M773.0 1105.0 h4.6 V1121 h-4.6z M778.8 1107.8 h4.6 V1121 h-4.6z M784.5 1117.0 h4.6 V1121 h-4.6z M790.2 1105.8 h4.6 V1121 h-4.6z M795.9 1110.8 h4.6 V1121 h-4.6z M801.6 1110.0 h4.6 V1121 h-4.6z M807.3 1098.9 h4.6 V1121 h-4.6z M818.8 1115.8 h4.6 V1121 h-4.6z M824.5 1113.8 h4.6 V1121 h-4.6z M830.2 1112.0 h4.6 V1121 h-4.6z M835.9 1107.0 h4.6 V1121 h-4.6z M841.6 1117.0 h4.6 V1121 h-4.6z M847.3 1112.0 h4.6 V1121 h-4.6z M853.1 1092.9 h4.6 V1121 h-4.6z M858.8 1098.9 h4.6 V1121 h-4.6z M870.2 1109.0 h4.6 V1121 h-4.6z M887.4 1089.7 h4.6 V1121 h-4.6z M898.8 1098.9 h4.6 V1121 h-4.6z M904.5 1097.9 h4.6 V1121 h-4.6z M915.9 1109.5 h4.6 V1121 h-4.6z M921.7 1112.0 h4.6 V1121 h-4.6z M927.4 1110.3 h4.6 V1121 h-4.6z M933.1 1112.8 h4.6 V1121 h-4.6z M938.8 1115.3 h4.6 V1121 h-4.6z M944.5 1103.8 h4.6 V1121 h-4.6z M950.2 1107.6 h4.6 V1121 h-4.6z M955.9 1116.3 h4.6 V1121 h-4.6z M973.1 1107.6 h4.6 V1121 h-4.6z M990.2 1112.8 h4.6 V1121 h-4.6z M996.0 1110.3 h4.6 V1121 h-4.6z M1001.7 1097.9 h4.6 V1121 h-4.6z M1007.4 1067.3 h4.6 V1121 h-4.6z M1013.1 1108.3 h4.6 V1121 h-4.6z M1018.8 1102.0 h4.6 V1121 h-4.6z M1030.3 1111.3 h4.6 V1121 h-4.6z M1036.0 1116.3 h4.6 V1121 h-4.6z M1041.7 1112.0 h4.6 V1121 h-4.6z M1047.4 1112.8 h4.6 V1121 h-4.6z M1053.1 1110.3 h4.6 V1121 h-4.6z M1058.8 1113.8 h4.6 V1121 h-4.6z M1064.6 1116.3 h4.6 V1121 h-4.6z M1070.3 1105.8 h4.6 V1121 h-4.6z M1076.0 1112.8 h4.6 V1121 h-4.6z M1081.7 1117.0 h4.6 V1121 h-4.6z M1087.4 1113.8 h4.6 V1121 h-4.6z M1093.1 1083.0 h4.6 V1121 h-4.6z M1110.3 1109.4 h4.6 V1121 h-4.6z M1116.0 1026.2 h4.6 V1121 h-4.6z M1121.7 1099.0 h4.6 V1121 h-4.6z M1127.4 1106.0 h4.6 V1121 h-4.6z M1133.1 1108.0 h4.6 V1121 h-4.6z M1138.9 1115.0 h4.6 V1121 h-4.6z M1150.3 1108.0 h4.6 V1121 h-4.6z M1167.4 1099.0 h4.6 V1121 h-4.6z M1184.6 1051.2 h4.6 V1121 h-4.6z M1190.3 1094.0 h4.6 V1121 h-4.6z M1196.0 1110.0 h4.6 V1121 h-4.6z M1201.7 1103.6 h4.6 V1121 h-4.6z M1207.5 1082.0 h4.6 V1121 h-4.6z M1213.2 1106.0 h4.6 V1121 h-4.6z M1218.9 1098.0 h4.6 V1121 h-4.6z M1224.6 1105.0 h4.6 V1121 h-4.6z M1236.0 1098.0 h4.6 V1121 h-4.6z M1253.2 1092.0 h4.6 V1121 h-4.6z M1258.9 1110.6 h4.6 V1121 h-4.6z M1264.6 1095.0 h4.6 V1121 h-4.6z M1270.3 1079.0 h4.6 V1121 h-4.6z M1276.0 1111.6 h4.6 V1121 h-4.6z M1281.8 1103.0 h4.6 V1121 h-4.6z M1293.2 1086.0 h4.6 V1121 h-4.6z" fill="#e63838"/>
<path d="M127.1 1113.4 h4.6 V1121 h-4.6z M184.3 1116.0 h4.6 V1121 h-4.6z M190.0 1115.4 h4.6 V1121 h-4.6z M230.0 1117.0 h4.6 V1121 h-4.6z M493.0 1119.0 h4.6 V1121 h-4.6z M510.1 1117.5 h4.6 V1121 h-4.6z M550.1 1116.6 h4.6 V1121 h-4.6z M573.0 1116.6 h4.6 V1121 h-4.6z M584.4 1111.0 h4.6 V1121 h-4.6z M607.3 1115.0 h4.6 V1121 h-4.6z M613.0 1086.8 h4.6 V1121 h-4.6z M647.3 1115.0 h4.6 V1121 h-4.6z M658.7 1116.0 h4.6 V1121 h-4.6z M681.6 1117.6 h4.6 V1121 h-4.6z M687.3 1116.0 h4.6 V1121 h-4.6z M693.0 1117.6 h4.6 V1121 h-4.6z M721.6 1117.6 h4.6 V1121 h-4.6z M733.0 1113.4 h4.6 V1121 h-4.6z M744.5 1098.5 h4.6 V1121 h-4.6z M813.0 1113.3 h4.6 V1121 h-4.6z M864.5 1105.8 h4.6 V1121 h-4.6z M875.9 1117.0 h4.6 V1121 h-4.6z M881.6 1112.8 h4.6 V1121 h-4.6z M893.1 1118.0 h4.6 V1121 h-4.6z M910.2 1110.3 h4.6 V1121 h-4.6z M961.7 1116.3 h4.6 V1121 h-4.6z M967.4 1107.0 h4.6 V1121 h-4.6z M978.8 1112.8 h4.6 V1121 h-4.6z M984.5 1117.0 h4.6 V1121 h-4.6z M1024.5 1105.0 h4.6 V1121 h-4.6z M1098.8 1114.0 h4.6 V1121 h-4.6z M1104.6 1110.6 h4.6 V1121 h-4.6z M1144.6 1107.0 h4.6 V1121 h-4.6z M1156.0 1111.6 h4.6 V1121 h-4.6z M1161.7 1106.0 h4.6 V1121 h-4.6z M1173.2 1099.0 h4.6 V1121 h-4.6z M1178.9 1106.0 h4.6 V1121 h-4.6z M1230.3 1116.0 h4.6 V1121 h-4.6z M1241.7 1118.0 h4.6 V1121 h-4.6z M1247.5 1101.0 h4.6 V1121 h-4.6z M1287.5 1084.0 h4.6 V1121 h-4.6z" fill="#66b636"/>
<path d="M53.0 1117.8 L66.0 1117.8 L72.0 1118.7 L150.0 1118.6 L300.0 1118.4 L400.0 1118.3 L440.0 1118.4 L470.0 1118.4 L524.0 1115.2 L560.0 1115.2 L598.0 1115.2 L606.0 1114.4 L615.0 1113.4 L640.0 1113.3 L700.0 1113.2 L747.0 1113.0 L752.0 1112.8 L775.0 1113.2 L807.0 1112.0 L850.0 1112.0 L867.0 1107.0 L879.0 1109.5 L890.0 1107.6 L905.0 1106.6 L920.0 1108.3 L975.0 1108.3 L987.0 1109.5 L999.0 1109.0 L1010.0 1105.8 L1018.0 1107.6 L1043.0 1107.6 L1053.0 1108.8 L1090.0 1109.0 L1100.0 1107.8 L1112.0 1109.0 L1118.2 1105.0 L1147.0 1104.0 L1167.0 1103.6 L1172.0 1106.0 L1187.0 1103.6 L1212.0 1101.0 L1232.0 1100.4 L1264.0 1100.4 L1273.0 1098.0 L1279.0 1101.0 L1296.0 1100.6" stroke="#ffd000" stroke-width="2" fill="none" stroke-linejoin="round"/>
<rect x="53" y="1119.5" width="1316" height="2" fill="#ffd000"/>
<rect x="1407" y="106" width="1" height="994" fill="#12131a"/>
<rect x="1408" y="106" width="1" height="994" fill="#ffd000"/>
<rect x="1369" y="1100" width="40" height="21" fill="#ffd000"/>
<text x="1376" y="1113.8" font-size="12" fill="#111">04.11.2019</text>
<rect x="1407.1" y="1108.2" width="2" height="13" fill="#eef1f8"/>
<rect x="1396" y="1119" width="13" height="2" fill="#eef1f8"/>
</svg>
<div id="browser"><div id="pill"></div>
<svg width="140" height="31" style="position:absolute;left:0;top:0" fill="none" stroke-width="2" stroke-linecap="butt">
<path d="M25.5 13.5H12.5M18.5 7.2L12.2 13.5L18.5 19.8" stroke="#5f6368"/>
<path d="M44.5 13.5H57.5M51.5 7.2L57.8 13.5L51.5 19.8" stroke="#bdc1c6"/>
<path d="M88.6 9.4A6.3 6.3 0 1 0 89.3 15.4" stroke="#5f6368"/><path d="M90.6 6V11.6H85Z" fill="#5f6368" stroke="none"/>
<path d="M109.5 20.2V12.5L115 7.5L120.5 12.5V20.2H109.5Z M107.3 13.6L115 6.6L122.7 13.6" stroke="#5f6368" stroke-linejoin="miter"/>
</svg>
<svg width="12" height="14" style="position:absolute;left:149px;top:6px"><rect x="1.5" y="5.5" width="9" height="7.5" rx="1" fill="#5f6368"/><path d="M3.5 6V4a2.5 2.5 0 0 1 5 0V6" stroke="#5f6368" stroke-width="1.5" fill="none"/></svg>
<div id="url"><b>go.guidants.com</b>/de/#c/Dashboard</div>
</div>
<div id="bline"></div>
<div id="titlebar"></div><div id="bline2"></div>
<div id="title">Chart [ungespeichert]</div>
<div id="toolbar"></div>
<div id="sidebar"></div><div id="sideline"></div><div id="sideline2"></div>
<svg width="51" height="1121" viewBox="0 0 51 1121" style="position:absolute;left:0;top:0" fill="none">
<g stroke="#ffcb05" stroke-width="3.1" stroke-linecap="round" stroke-linejoin="round">
<path d="M19.3 46.7A7.9 7.9 0 1 0 21.9 57.4L24.3 54.6"/>
<path d="M27.2 61L24.3 54.6M26.2 57A7.9 7.9 0 1 1 36.2 60.6"/>
</g>
<rect x="11.7" y="52" width="8" height="3" rx="1" fill="#fff6dc"/><rect x="27.3" y="52" width="7.6" height="3" rx="1" fill="#fff6dc"/>
<circle cx="23.6" cy="106.5" r="19.6" fill="#30d6fc"/>
<g stroke="#2b2e33" stroke-width="1.4"><rect x="17.6" y="102.6" width="14.8" height="10" rx="1"/><circle cx="25" cy="107.6" r="2.1"/><path d="M19.6 107.6h1.4M29 107.6h1.4"/></g>
<g stroke="#bbbec6" stroke-width="1.5">
<path d="M17 160.3H22.3M27.7 160.3H33.7"/><circle cx="25" cy="160.3" r="2.6"/>
<path d="M25 208.2L31.6 219H18.4Z" stroke-linejoin="miter"/>
<path d="M16.7 260.6H27M16.7 263.4H25M16.7 266H22M28.5 266.6H33.5M25.5 269.3H33.5M23 272.1H33.5" stroke-width="1.3"/><path d="M21.1 270.7L29.3 262.4"/><circle cx="19.7" cy="272.1" r="2"/><circle cx="30.7" cy="261" r="2"/>
<path d="M23 367.5H17.5V377.8H23M17.5 372.5H22M22.5 378L33 367.5M27.5 367.3H33.2V373"/>
</g>
<rect x="18" y="312" width="14.5" height="14.8" rx="1" fill="#bbbec6"/>
<text x="25.2" y="324.6" text-anchor="middle" style="font-family:'Liberation Serif',serif;font-weight:bold;font-size:15px" fill="#2b2e33">T</text>
<rect x="2.5" y="403" width="43.5" height="1" fill="#16171a"/>
<g stroke="#bbbec6" stroke-linecap="butt">
<path d="M17.5 428.8L25.6 437.4" stroke-width="1.7"/><path d="M25.8 437.6L31.6 443.4" stroke-width="4.2"/>
<path d="M20 441.2L29.4 432.6" stroke-width="2.6"/>
<path d="M33.2 431.7A2.7 2.7 0 1 1 30.3 428.8" stroke-width="1.9"/>
<path d="M16.9 442.2A1.9 1.9 0 1 1 19 444.3" stroke-width="1.6"/>
</g>
<g fill="#bbbec6"><path d="M19.5 482.3h11.7v6.7h-11.7zM21 483.8v3.7h8.7v-3.7z" fill-rule="evenodd"/><rect x="19.5" y="490.5" width="5" height="3.3"/><rect x="26" y="490.5" width="5.2" height="1.3"/><rect x="26" y="492.6" width="5.2" height="1.3"/><rect x="19.5" y="495.3" width="11.7" height="1.4"/></g>
<circle cx="25.1" cy="1090.4" r="7.6" stroke="#bbbec6" stroke-width="1.6"/><path d="M24 1082.9A7.6 7.6 0 1 1 24 1097.9Z" fill="#bbbec6"/>
</svg>

<div class="btn" style="left:57px;width:67px"><svg width="67" height="24" style="position:absolute;left:0;top:0"><path d="M8.9 15.8L13.9 11.8L16.7 13.7L21.1 8.7" stroke="#fff" stroke-width="2" fill="none"/><path d="M66.6 18.4V23.6H61.4Z" fill="#fff"/></svg><span id="t_chart" style="left:28.3px">Chart</span></div>
<div class="btn" style="left:129px;width:64px"><svg width="64" height="24" style="position:absolute;left:0;top:0"><circle cx="15.6" cy="11" r="4.2" stroke="#fff" stroke-width="1.5" fill="none"/><path d="M18.6 14.2L21.8 17.5" stroke="#fff" stroke-width="1.9"/><path d="M63.6 18.4V23.6H58.4Z" fill="#fff"/></svg><span id="t_wert" style="left:28.6px">Wert</span></div>
<div class="btn" style="left:198px;width:75px;border-radius:3px 0 0 3px"><svg width="30" height="24" style="position:absolute;left:0;top:0" stroke="#fff" fill="none"><path d="M12.1 6V17.6M15.8 7.5V18M20.1 5.6V17.2" stroke-width="1"/><rect x="10.9" y="7.8" width="2.4" height="8.3" fill="#fff" stroke="none"/><rect x="14.6" y="9.9" width="2.4" height="6" stroke-width="0.9" fill="#1c1f24"/><rect x="18.9" y="7.3" width="2.4" height="8.5" fill="#fff" stroke="none"/></svg><span id="t_kerzen" style="left:28.8px">Kerzen</span></div>
<div class="btn" style="left:274px;width:30px;border-radius:0 3px 3px 0"><span id="t_1d" style="left:8.7px">1d</span></div>
<div class="btn" style="left:309px;width:94px"><div style="position:absolute;left:0;top:0;width:28px;height:22px;background:#3b3e45;border:1px solid #1d1f23;border-radius:3px 0 0 3px"></div><svg width="30" height="24" style="position:absolute;left:0;top:0"><circle cx="16.3" cy="12.1" r="5" stroke="#fff" stroke-width="1.3" fill="none"/><path d="M16.3 9V12.3H19.3" stroke="#fff" stroke-width="1.3" fill="none"/></svg><span id="t_6m" style="left:37.1px">6 Monate</span></div>
<div class="btn" style="left:408px;width:100px"><span id="t_fx" style="left:10.1px;font-style:italic;font-size:12.5px;letter-spacing:-0.6px">fx</span><span id="t_ind" style="left:28.2px">Indikatoren</span></div>
<div class="btn" style="left:513px;width:30px"><svg width="30" height="24" style="position:absolute;left:0;top:0"><path d="M12.1 7.8H18.5V15.2L15.3 12.6L12.1 15.2Z" fill="#fff"/></svg></div>

<div class="leg" style="top:111px;width:469px;color:#e8413c"><svg width="14" height="16" style="position:absolute;left:-1px;top:-1px" stroke="#f53a3a" fill="none" stroke-width="1"><path d="M3.5 4V13M7.5 2.8V14M11.5 4V13"/><rect x="2.5" y="5.5" width="2" height="4" fill="#1e1d1c"/><rect x="6.5" y="7.5" width="2" height="4.5" fill="#1e1d1c"/><rect x="10.5" y="5.5" width="2" height="4" fill="#1e1d1c"/></svg>
<span id="l_name" style="left:20px">Tanger Fact.Outlet Centrs Inc. (Tradegate, Last)</span><span id="l_o" style="left:259px">O: 13,498</span><span id="l_h" style="left:314px">H: 13,624</span><span id="l_l" style="left:367px">L: 13,000</span><span id="l_c" style="left:419px">C: 13,328</span></div>
<div class="leg" style="top:127px;width:188px;color:#2f9fd0"><div style="position:absolute;left:4px;top:6.5px;width:8px;height:3px;background:#2baad8"></div>
<span id="l_bb" style="left:20px">BB(20, 2)</span><span id="l_b1" style="left:72px">15,426</span><span id="l_b2" style="left:112px;color:#a2489a">14,169</span><span id="l_b3" style="left:151px;color:#7568a0">12,911</span></div>
<div class="leg" style="top:143px;width:243px;color:#fff;font-weight:bold"><svg width="14" height="16" style="position:absolute;left:1px;top:-1px"><circle cx="6.5" cy="8" r="4.6" stroke="#fff" stroke-width="1.2" fill="none"/><path d="M6.5 5.3V8.2L8.6 9.6" stroke="#fff" stroke-width="1.1" fill="none"/></svg>
<span id="l_date" style="left:20px">14.11.2018 - 08.10.2019</span><span id="l_dur" style="left:148px;letter-spacing:-0.15px">(11 Monate, 1 Tag)</span></div>
<div class="leg" style="top:1026px;width:146px;background:none;color:#d93832"><svg width="14" height="16" style="position:absolute;left:1px;top:0"><rect x="1" y="7" width="3" height="5.5" fill="#e0302c"/><rect x="5" y="3.5" width="3" height="9" fill="#e0302c"/><rect x="9" y="8.5" width="3" height="4" fill="#e0302c"/></svg>
<span id="l_vol" style="left:20px">Volume(28)</span><span id="l_v1" style="left:82px">6,18k</span><span id="l_v2" style="left:115px;color:#ffd200;font-weight:bold">3,68k</span></div>
<div class="sbtn" style="left:58px"><svg width="20" height="20"><path d="M10 4.8L16 9.5H12V13.8H8V9.5H4Z" fill="#fff"/></svg></div>
<div class="sbtn" style="left:82px"><svg width="20" height="20"><path d="M10 3L16.1 7.2H3.9ZM10 17.2L16.1 13H3.9Z" fill="#fff"/><rect x="3.9" y="8.6" width="12.2" height="2.8" fill="#fff"/></svg></div>

</body></html>
